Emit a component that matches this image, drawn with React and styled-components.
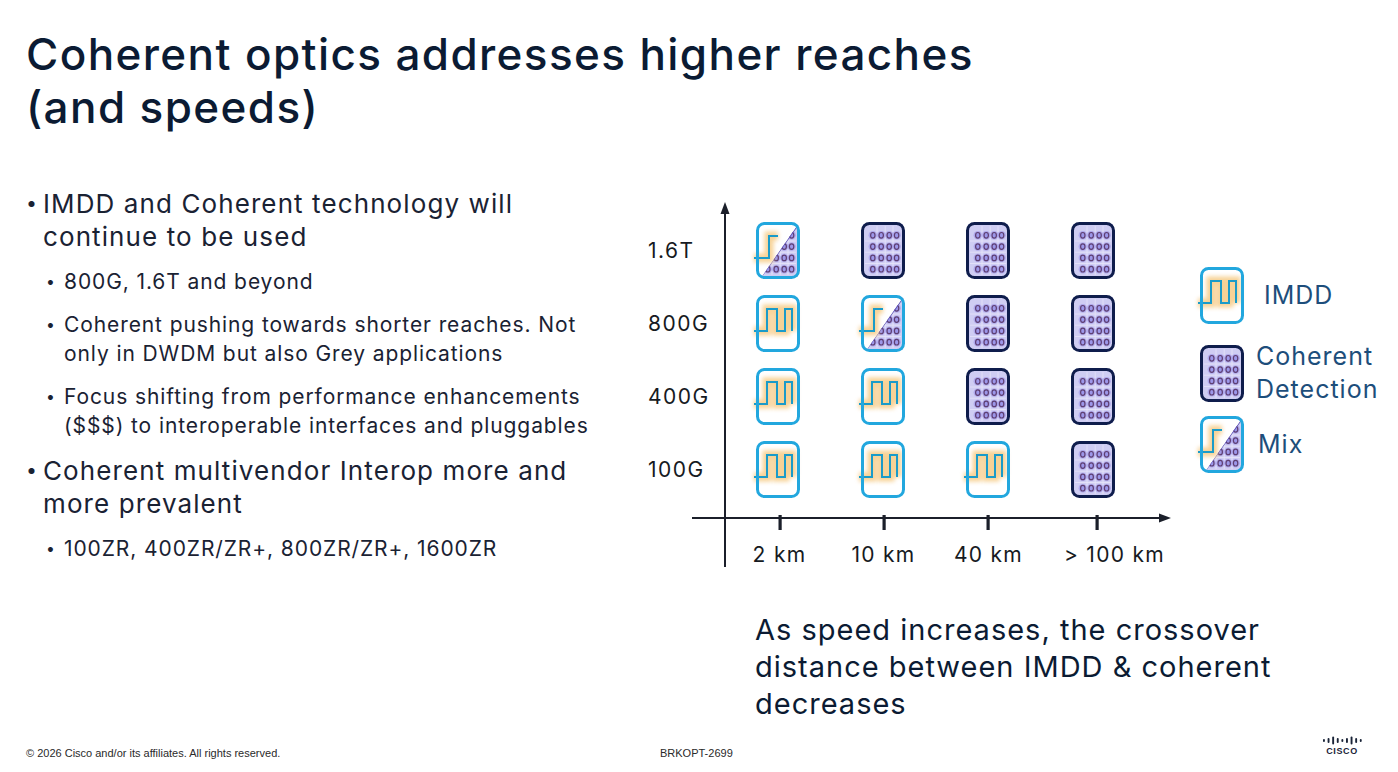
import React, { useId } from 'react';
import styled, { createGlobalStyle } from 'styled-components';

const GlobalStyle = createGlobalStyle`
  html, body {
    margin: 0;
    padding: 0;
    background: #ffffff;
  }
  body {
    font-family: Inter, "Noto Sans", sans-serif;
    color: #0b1b33;
  }
`;

const Slide = styled.div`
  width: 1398px;
  height: 772px;
  box-sizing: border-box;
  padding: 28px 0 0 26px;
  display: flex;
  flex-direction: column;
  overflow: hidden;
  background: #fff;
`;

const Title = styled.h1`
  margin: 0;
  font-size: 44px;
  font-weight: 500;
  line-height: 53px;
  letter-spacing: 1.4px;
  color: #0b1b33;
`;

const Body = styled.div`
  display: flex;
  margin-top: 53px;
`;

const LeftCol = styled.div`
  width: 614px;
  display: flex;
  flex-direction: column;
  gap: 14px;
`;

const Item = styled.div`
  display: flex;
  margin-left: ${({ $level }) => ($level === 2 ? '20px' : '0')};
  font-size: ${({ $level }) => ($level === 2 ? '21px' : '26px')};
  line-height: ${({ $level }) => ($level === 2 ? '29px' : '33px')};
  letter-spacing: ${({ $level }) => ($level === 2 ? '0.9px' : '1.1px')};
  color: #1a2233;
`;

const Dot = styled.span`
  flex: 0 0 ${({ $level }) => ($level === 2 ? '18px' : '17px')};
  font-size: 0.75em;
  letter-spacing: 0;
`;

const ItemText = styled.span`
  max-width: ${({ $level }) => ($level === 2 ? '545px' : '535px')};
`;

const RightCol = styled.div`
  display: flex;
  flex-direction: column;
  padding-top: 7px;
`;

const ChartRow = styled.div`
  display: flex;
  gap: 20px;
`;

const Chart = styled.div`
  position: relative;
  width: 540px;
  height: 380px;
  flex-shrink: 0;
  box-sizing: border-box;
  padding-top: 20px;
  display: grid;
  grid-template-columns: 85px repeat(4, 105px);
  grid-template-rows: repeat(4, 73px) 1fr;
`;

const Axes = styled.svg`
  position: absolute;
  inset: 0;
  pointer-events: none;
`;

const YLabel = styled.div`
  display: flex;
  align-items: center;
  padding: 0 0 1px 8px;
  font-size: 21px;
  letter-spacing: 1.5px;
  color: #161a22;
`;

const Cell = styled.div`
  display: flex;
  align-items: center;
  justify-content: center;
`;

const XLabel = styled.div`
  padding-top: 37px;
  line-height: 24px;
  font-size: 21px;
  letter-spacing: 1.3px;
  text-align: center;
  white-space: nowrap;
  color: #161a22;
  transform: translateX(${({ $shift }) => $shift || 0}px);
`;

const Legend = styled.div`
  margin-top: 73px;
  display: flex;
  flex-direction: column;
`;

const LegendItem = styled.div`
  display: flex;
  align-items: center;
  margin-top: ${({ $mt }) => $mt || 0}px;
  gap: ${({ $gap }) => $gap}px;
`;

const LegendText = styled.div`
  font-size: 25px;
  line-height: 33px;
  letter-spacing: 1px;
  color: #1d4e7b;
`;

const Caption = styled.p`
  margin: 37px 0 0 115px;
  font-size: 29px;
  line-height: 37px;
  letter-spacing: 1px;
  color: #0b1b33;
  max-width: 560px;
`;

const Footer = styled.div`
  margin-top: auto;
  height: 36px;
  display: flex;
  align-items: flex-start;
  padding-right: 36px;
`;

const FootText = styled.div`
  width: ${({ $w }) => $w || 'auto'};
  margin-top: 11px;
  font-family: "Liberation Sans", Arial, sans-serif;
  font-size: 11px;
  line-height: 12px;
  color: #2a2a2a;
`;

const Logo = styled.div`
  margin: 0 0 0 auto;
  display: flex;
  flex-direction: column;
  align-items: center;
  gap: 2px;
`;

const LogoWord = styled.span`
  font-family: "Liberation Sans", Arial, sans-serif;
  font-weight: 700;
  font-size: 9px;
  line-height: 9px;
  letter-spacing: 0.6px;
  color: #1a2438;
`;

const IconSvg = styled.svg`
  overflow: visible;
  display: block;
  flex-shrink: 0;
`;

const COLS = [11.8, 20.2, 28.2, 35.6];
const ROWS = [13.3, 24.6, 35.9, 47.2];

function Constellation() {
  return (
    <g>
      <rect x="2" y="2" width="40" height="53" fill="#cfcdf3" />
      {[16, 24.2, 32].map((x) => (
        <line key={x} x1={x} y1="4" x2={x} y2="53" stroke="#e9e8fb" strokeWidth="0.7" />
      ))}
      {[19, 30.2, 41.5].map((y) => (
        <line key={y} x1="4" y1={y} x2="40" y2={y} stroke="#e9e8fb" strokeWidth="0.7" />
      ))}
      {ROWS.map((cy) =>
        COLS.map((cx) => (
          <g key={`${cx}-${cy}`}>
            <circle cx={cx} cy={cy} r="4.2" fill="#9c94e8" opacity="0.65" />
            <ellipse cx={cx} cy={cy} rx="2.2" ry="2.8" fill="#9d97ea" stroke="#5e3f72" strokeWidth="1.2" />
          </g>
        ))
      )}
    </g>
  );
}

function ModIcon({ kind }) {
  const id = useId().replace(/[^a-zA-Z0-9]/g, '');
  const border = kind === 'coh' ? '#0f1d4c' : '#22a7de';
  const wave = kind === 'mix' ? 'M-2 36 H13 V14 H22' : 'M-2 36 H11 V14 H21 V36 H29 V14 H36 V36';
  return (
    <IconSvg viewBox="0 0 44 57" width="44" height="57">
      <defs>
        <filter id={`f${id}`} x="-40%" y="-40%" width="180%" height="180%">
          <feGaussianBlur stdDeviation="2" />
        </filter>
        <clipPath id={`c${id}`}>
          <polygon points="43,1 43,56 5,56" />
        </clipPath>
      </defs>
      <rect x="1.5" y="1.5" width="41" height="54" rx="7" fill="#fff" />
      {kind === 'coh' && <Constellation />}
      {kind === 'mix' && (
        <g clipPath={`url(#c${id})`}>
          <Constellation />
          <line x1="42" y1="3" x2="6" y2="54" stroke="#5b4fb0" strokeWidth="1.2" />
        </g>
      )}
      {kind !== 'coh' && (
        <g>
          <path d={wave} fill="none" stroke="#f5c77d" strokeWidth="9" opacity="0.8" filter={`url(#f${id})`} />
          <path d={wave} fill="none" stroke="#1a9bc9" strokeWidth="2" />
        </g>
      )}
      <rect x="1.5" y="1.5" width="41" height="54" rx="7" fill="none" stroke={border} strokeWidth="3" />
    </IconSvg>
  );
}

function CiscoBars() {
  const h = [3, 5, 8, 5, 3, 5, 8, 5, 3];
  return (
    <svg width="40" height="9" viewBox="0 0 40 9">
      {h.map((v, i) => (
        <rect key={i} x={1 + i * 4.6} y={(9 - v) / 2} width="1.9" height={v} rx="0.9" fill="#1a2438" />
      ))}
    </svg>
  );
}

const grid = [
  ['1.6T', ['mix', 'coh', 'coh', 'coh']],
  ['800G', ['imdd', 'mix', 'coh', 'coh']],
  ['400G', ['imdd', 'imdd', 'coh', 'coh']],
  ['100G', ['imdd', 'imdd', 'imdd', 'coh']],
];

const distances = [
  ['2 km', 2],
  ['10 km', 1],
  ['40 km', 1],
  ['> 100 km', 22],
];

const ticks = [140, 244, 348, 457];

export default function App() {
  return (
    <>
      <GlobalStyle />
      <Slide>
        <Title>
          Coherent optics addresses higher reaches
          <br />
          (and speeds)
        </Title>

        <Body>
          <LeftCol>
            <Item $level={1}>
              <Dot $level={1}>•</Dot>
              <ItemText $level={1}>IMDD and Coherent technology will continue to be used</ItemText>
            </Item>
            <Item $level={2}>
              <Dot $level={2}>•</Dot>
              <ItemText $level={2}>800G, 1.6T and beyond</ItemText>
            </Item>
            <Item $level={2}>
              <Dot $level={2}>•</Dot>
              <ItemText $level={2}>
                Coherent pushing towards shorter reaches. Not only in DWDM but also Grey applications
              </ItemText>
            </Item>
            <Item $level={2}>
              <Dot $level={2}>•</Dot>
              <ItemText $level={2}>
                Focus shifting from performance enhancements ($$$) to interoperable interfaces and pluggables
              </ItemText>
            </Item>
            <Item $level={1}>
              <Dot $level={1}>•</Dot>
              <ItemText $level={1}>Coherent multivendor Interop more and more prevalent</ItemText>
            </Item>
            <Item $level={2}>
              <Dot $level={2}>•</Dot>
              <ItemText $level={2}>100ZR, 400ZR/ZR+, 800ZR/ZR+, 1600ZR</ItemText>
            </Item>
          </LeftCol>

          <RightCol>
            <ChartRow>
              <Chart>
                <Axes width="540" height="380" viewBox="0 0 540 380">
                  <line x1="85" y1="18" x2="85" y2="373" stroke="#1b1f2a" strokeWidth="2" />
                  <polygon points="85,8 80.5,20 89.5,20" fill="#1b1f2a" />
                  <line x1="52" y1="324" x2="520" y2="324" stroke="#1b1f2a" strokeWidth="2" />
                  <polygon points="531,324 519,319.5 519,328.5" fill="#1b1f2a" />
                  {ticks.map((x) => (
                    <rect key={x} x={x - 1.5} y="321" width="3.2" height="15" fill="#1b1f2a" />
                  ))}
                </Axes>
                {grid.map(([label, kinds]) => (
                  <React.Fragment key={label}>
                    <YLabel>{label}</YLabel>
                    {kinds.map((k, i) => (
                      <Cell key={i}>
                        <ModIcon kind={k} />
                      </Cell>
                    ))}
                  </React.Fragment>
                ))}
                <div />
                {distances.map(([d, s]) => (
                  <XLabel key={d} $shift={s}>
                    {d}
                  </XLabel>
                ))}
              </Chart>

              <Legend>
                <LegendItem $gap={20}>
                  <ModIcon kind="imdd" />
                  <LegendText>IMDD</LegendText>
                </LegendItem>
                <LegendItem $gap={12} $mt={16}>
                  <ModIcon kind="coh" />
                  <LegendText>
                    Coherent
                    <br />
                    Detection
                  </LegendText>
                </LegendItem>
                <LegendItem $gap={14} $mt={10}>
                  <ModIcon kind="mix" />
                  <LegendText>Mix</LegendText>
                </LegendItem>
              </Legend>
            </ChartRow>

            <Caption>
              As speed increases, the crossover distance between IMDD &amp; coherent decreases
            </Caption>
          </RightCol>
        </Body>

        <Footer>
          <FootText $w="634px">© 2026 Cisco and/or its affiliates. All rights reserved.</FootText>
          <FootText>BRKOPT-2699</FootText>
          <Logo>
            <CiscoBars />
            <LogoWord>CISCO</LogoWord>
          </Logo>
        </Footer>
      </Slide>
    </>
  );
}
